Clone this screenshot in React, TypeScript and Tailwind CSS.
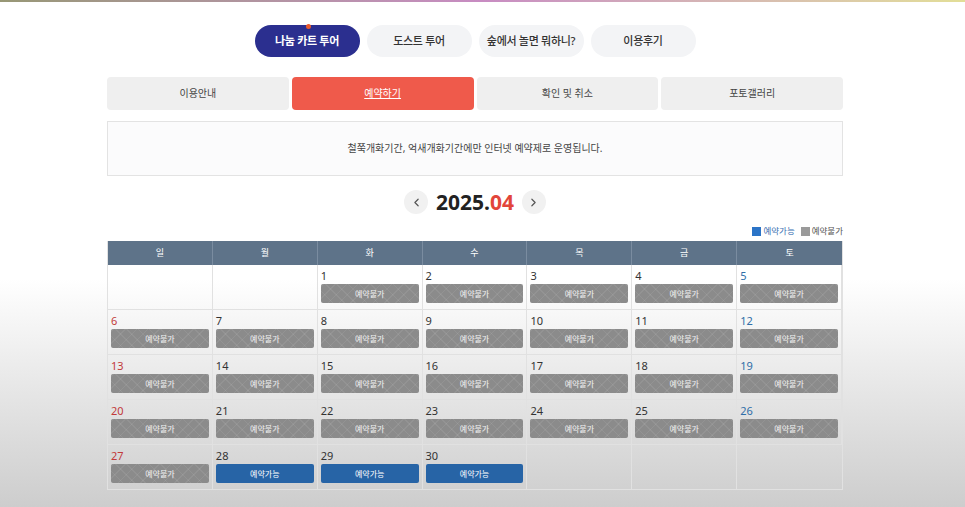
import { ChevronLeft, ChevronRight } from "lucide-react";

const pills = ["나눔 카트 투어", "도스트 투어", "숲에서 놀면 뭐하니?", "이용후기"];
const tabs = ["이용안내", "예약하기", "확인 및 취소", "포토갤러리"];
const days = ["일", "월", "화", "수", "목", "금", "토"];

// April 2025 starts on Tuesday
const cells: (number | null)[] = [null, null];
for (let d = 1; d <= 30; d++) cells.push(d);
while (cells.length < 35) cells.push(null);

const open = [28, 29, 30];

const DayCell = ({ day, col }: { day: number | null; col: number }) => {
  const color = col === 0 ? "text-[#c23a3a]" : col === 6 ? "text-[#2f6ea8]" : "text-[#333]";
  return (
    <div className="h-[45px] border-r border-b border-[#e1e1e1] px-[3px] pt-[3px] last:border-r-0">
      {day !== null && (
        <>
          <div className={`h-[16px] text-[11px] leading-[16px] ${color}`}>{day}</div>
          {open.includes(day) ? (
            <div className="flex h-[19px] items-center justify-center rounded-[2px] bg-[#2764a6] text-[8px] text-white">
              예약가능
            </div>
          ) : (
            <div className="flex h-[19px] items-center justify-center rounded-[2px] bg-[#8b8b8b] bg-[repeating-linear-gradient(45deg,rgba(255,255,255,0.07)_0_1px,transparent_1px_8px),repeating-linear-gradient(-45deg,rgba(255,255,255,0.07)_0_1px,transparent_1px_8px)] text-[8px] text-[#f2f2f2]">
              예약불가
            </div>
          )}
        </>
      )}
    </div>
  );
};

export default function App() {
  return (
    <div className="relative h-[507px] w-full overflow-hidden bg-linear-to-b from-white from-55% to-[#cdcdcd] font-['Noto_Sans','Noto_Sans_CJK_KR',sans-serif]">
      <div className="h-[2px] w-full bg-linear-to-r from-[#6b6b3a] via-[#b05aa8] to-[#d6d06a] opacity-70" />

      <div className="ml-[107px] w-[736px]">
        {/* top pills */}
        <div className="mt-[23px] flex justify-center gap-[7px]">
          {pills.map((p, i) => (
            <div
              key={p}
              className={`relative flex h-[32px] w-[105px] items-center justify-center rounded-full text-[11px] tracking-[-0.3px] ${
                i === 0 ? "bg-[#2b2f8f] font-bold text-white" : "bg-[#f3f4f6] font-medium text-[#333]"
              }`}
            >
              {p}
              {i === 0 && (
                <span className="absolute top-[-1px] left-[51px] h-[5px] w-[5px] rounded-full bg-[#ea5a2c]" />
              )}
            </div>
          ))}
        </div>

        {/* tabs */}
        <div className="mt-[20px] grid grid-cols-4 gap-[3px]">
          {tabs.map((t, i) => (
            <div
              key={t}
              className={`flex h-[33px] items-center justify-center rounded-[4px] text-[10px] ${
                i === 1 ? "bg-[#ef5a4b] text-white underline" : "bg-[#efefef] text-[#444]"
              }`}
            >
              {t}
            </div>
          ))}
        </div>

        {/* notice */}
        <div className="mt-[11px] flex h-[55px] items-center justify-center border border-[#e3e3e3] bg-[#fbfbfc] text-[10px] text-[#444]">
          철쭉개화기간, 억새개화기간에만 인터넷 예약제로 운영됩니다.
        </div>

        {/* month nav */}
        <div className="mt-[13px] flex items-center justify-center gap-[8px]">
          <div className="flex h-[24px] w-[24px] items-center justify-center rounded-full bg-[#f1f1f1] text-[#555]">
            <ChevronLeft size={13} strokeWidth={2.2} />
          </div>
          <div className="text-[21px] leading-[26px] font-bold text-[#222]">
            2025.<span className="text-[#e2453a]">04</span>
          </div>
          <div className="flex h-[24px] w-[24px] items-center justify-center rounded-full bg-[#f1f1f1] text-[#555]">
            <ChevronRight size={13} strokeWidth={2.2} />
          </div>
        </div>

        {/* legend */}
        <div className="mt-[10px] flex justify-end gap-[6px] text-[8.5px] leading-[12px]">
          <div className="flex items-center gap-[2px] text-[#3a6fb2]">
            <span className="h-[9px] w-[9px] bg-[#2b74c7]" />
            예약가능
          </div>
          <div className="flex items-center gap-[2px] text-[#555]">
            <span className="h-[9px] w-[9px] bg-[#9a9a9a]" />
            예약불가
          </div>
        </div>

        {/* calendar */}
        <div className="mt-[4px] border-l border-[#e1e1e1] border-r">
          <div className="grid grid-cols-7 bg-[#5e7389]">
            {days.map((d) => (
              <div
                key={d}
                className="flex h-[24px] items-center justify-center border-r border-[#7a8ca0] text-[9px] text-white last:border-r-0"
              >
                {d}
              </div>
            ))}
          </div>
          <div className="grid grid-cols-7">
            {cells.map((d, i) => (
              <DayCell key={i} day={d} col={i % 7} />
            ))}
          </div>
        </div>
      </div>
    </div>
  );
}
